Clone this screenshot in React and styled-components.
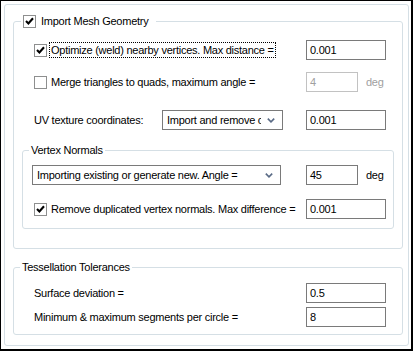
import React from "react";
import styled, { createGlobalStyle } from "styled-components";

const GlobalStyle = createGlobalStyle`
  body {
    margin: 0;
    background: #fff;
    font-family: "Liberation Sans", Arial, sans-serif;
    font-size: 11px;
    letter-spacing: -0.25px;
    color: #000;
  }
`;

const Window = styled.div`
  box-sizing: border-box;
  width: 413px;
  height: 351px;
  border-style: solid;
  border-color: #000;
  border-width: 1px 2px 2px 1px;
  padding: 3px 2px 3px 3px;
`;

const Frame = styled.div`
  box-sizing: border-box;
  width: 405px;
  height: 342px;
  border: 1px solid #d5dfe5;
  border-radius: 3px;
  padding: 9px 5px 0 8px;
`;

const Group = styled.fieldset`
  margin: ${(p) => p.$margin || "0"};
  padding: 0;
  min-width: 0;
  border: 1px solid #d5dfe5;
  border-radius: 3px;
`;

const Legend = styled.legend`
  display: flex;
  align-items: center;
  height: ${(p) => p.$height || 13}px;
  margin-left: ${(p) => p.$indent}px;
  padding: 0 ${(p) => p.$padRight || 2}px 0 2px;
  line-height: 13px;
`;

const Body = styled.div`
  display: flex;
  flex-direction: column;
  padding: ${(p) => p.$padding};
`;

const Row = styled.div`
  display: flex;
  align-items: center;
  height: 20px;
  margin-top: ${(p) => p.$top || 0}px;
  padding-left: ${(p) => p.$indent || 0}px;
`;

const LabelCell = styled.div`
  display: flex;
  align-items: center;
  width: ${(p) => p.$width}px;
  flex-shrink: 0;
  white-space: nowrap;
`;

const Box = styled.span`
  box-sizing: border-box;
  display: inline-flex;
  align-items: center;
  justify-content: center;
  width: 13px;
  height: 13px;
  border: 1px solid #8e8f8f;
  background: #fff;
  flex-shrink: 0;
`;

const Caption = styled.span`
  margin-left: ${(p) => p.$gap ?? 2}px;
  padding: 0 1px;
  border: 1px ${(p) => (p.$focused ? "dotted #000" : "solid transparent")};
  line-height: 14px;
  white-space: nowrap;
`;

const TextBox = styled.div`
  box-sizing: border-box;
  width: ${(p) => p.$width || 80}px;
  height: 20px;
  border: 1px solid ${(p) => (p.$disabled ? "#c2c2c2" : "#7a7a7a")};
  background: #fff;
  color: ${(p) => (p.$disabled ? "#a0a0a0" : "#000")};
  padding: 2px 3px 0;
  line-height: 14px;
  flex-shrink: 0;
`;

const Unit = styled.span`
  margin-left: 8px;
  color: ${(p) => (p.$disabled ? "#a0a0a0" : "#000")};
`;

const Combo = styled.div`
  box-sizing: border-box;
  display: flex;
  align-items: center;
  width: ${(p) => p.$width}px;
  height: 20px;
  margin-right: ${(p) => p.$after}px;
  border: 1px solid #7a7a7a;
  background: #fff;
  padding: 0 7px 0 4px;
  flex-shrink: 0;
`;

const ComboText = styled.span`
  flex: 1;
  overflow: hidden;
  white-space: nowrap;
  line-height: 14px;
  margin-right: 6px;
`;

const Check = ({ checked }) => (
  <Box>
    {checked && (
      <svg width="9" height="8" viewBox="0 0 9 8">
        <path d="M1 4 L3.4 6.4 L8 1.2" fill="none" stroke="#000" strokeWidth="2.1" />
      </svg>
    )}
  </Box>
);

const Chevron = () => (
  <svg width="8" height="5" viewBox="0 0 8 5">
    <path d="M0.8 0.6 L4 3.8 L7.2 0.6" fill="none" stroke="#5a6b86" strokeWidth="1.6" />
  </svg>
);

export default function App() {
  return (
    <>
      <GlobalStyle />
      <Window>
        <Frame>
          <Group>
            <Legend $indent={7} $height={14} $padRight={6}>
              <Check checked />
              <Caption $gap={3}>Import Mesh Geometry</Caption>
            </Legend>
            <Body $padding="12px 0 19px 0">
              <Row $indent={20}>
                <LabelCell $width={272}>
                  <Check checked />
                  <Caption $focused>Optimize (weld) nearby vertices. Max distance =</Caption>
                </LabelCell>
                <TextBox>0.001</TextBox>
              </Row>
              <Row $indent={20} $top={12}>
                <LabelCell $width={272}>
                  <Check />
                  <Caption>Merge triangles to quads, maximum angle =</Caption>
                </LabelCell>
                <TextBox $width={52} $disabled>4</TextBox>
                <Unit $disabled>deg</Unit>
              </Row>
              <Row $indent={20} $top={18}>
                <LabelCell $width={128}>UV texture coordinates:</LabelCell>
                <Combo $width={121} $after={23}>
                  <ComboText>Import and remove c</ComboText>
                  <Chevron />
                </Combo>
                <TextBox>0.001</TextBox>
              </Row>
              <Group $margin="14px 8px 0 8px">
                <Legend $indent={6}>Vertex Normals</Legend>
                <Body $padding="8px 0 9px 9px">
                  <Row>
                    <Combo $width={249} $after={25}>
                      <ComboText>Importing existing or generate new. Angle =</ComboText>
                      <Chevron />
                    </Combo>
                    <TextBox $width={52}>45</TextBox>
                    <Unit>deg</Unit>
                  </Row>
                  <Row $indent={2} $top={14}>
                    <LabelCell $width={272}>
                      <Check checked />
                      <Caption>Remove duplicated vertex normals. Max difference =</Caption>
                    </LabelCell>
                    <TextBox>0.001</TextBox>
                  </Row>
                </Body>
              </Group>
            </Body>
          </Group>
          <Group $margin="12px 0 0 0">
            <Legend $indent={6}>Tessellation Tolerances</Legend>
            <Body $padding="9px 0 7px 0">
              <Row $indent={20}>
                <LabelCell $width={272}>Surface deviation =</LabelCell>
                <TextBox>0.5</TextBox>
              </Row>
              <Row $indent={20} $top={4}>
                <LabelCell $width={272}>Minimum &amp; maximum segments per circle =</LabelCell>
                <TextBox>8</TextBox>
              </Row>
            </Body>
          </Group>
        </Frame>
      </Window>
    </>
  );
}
